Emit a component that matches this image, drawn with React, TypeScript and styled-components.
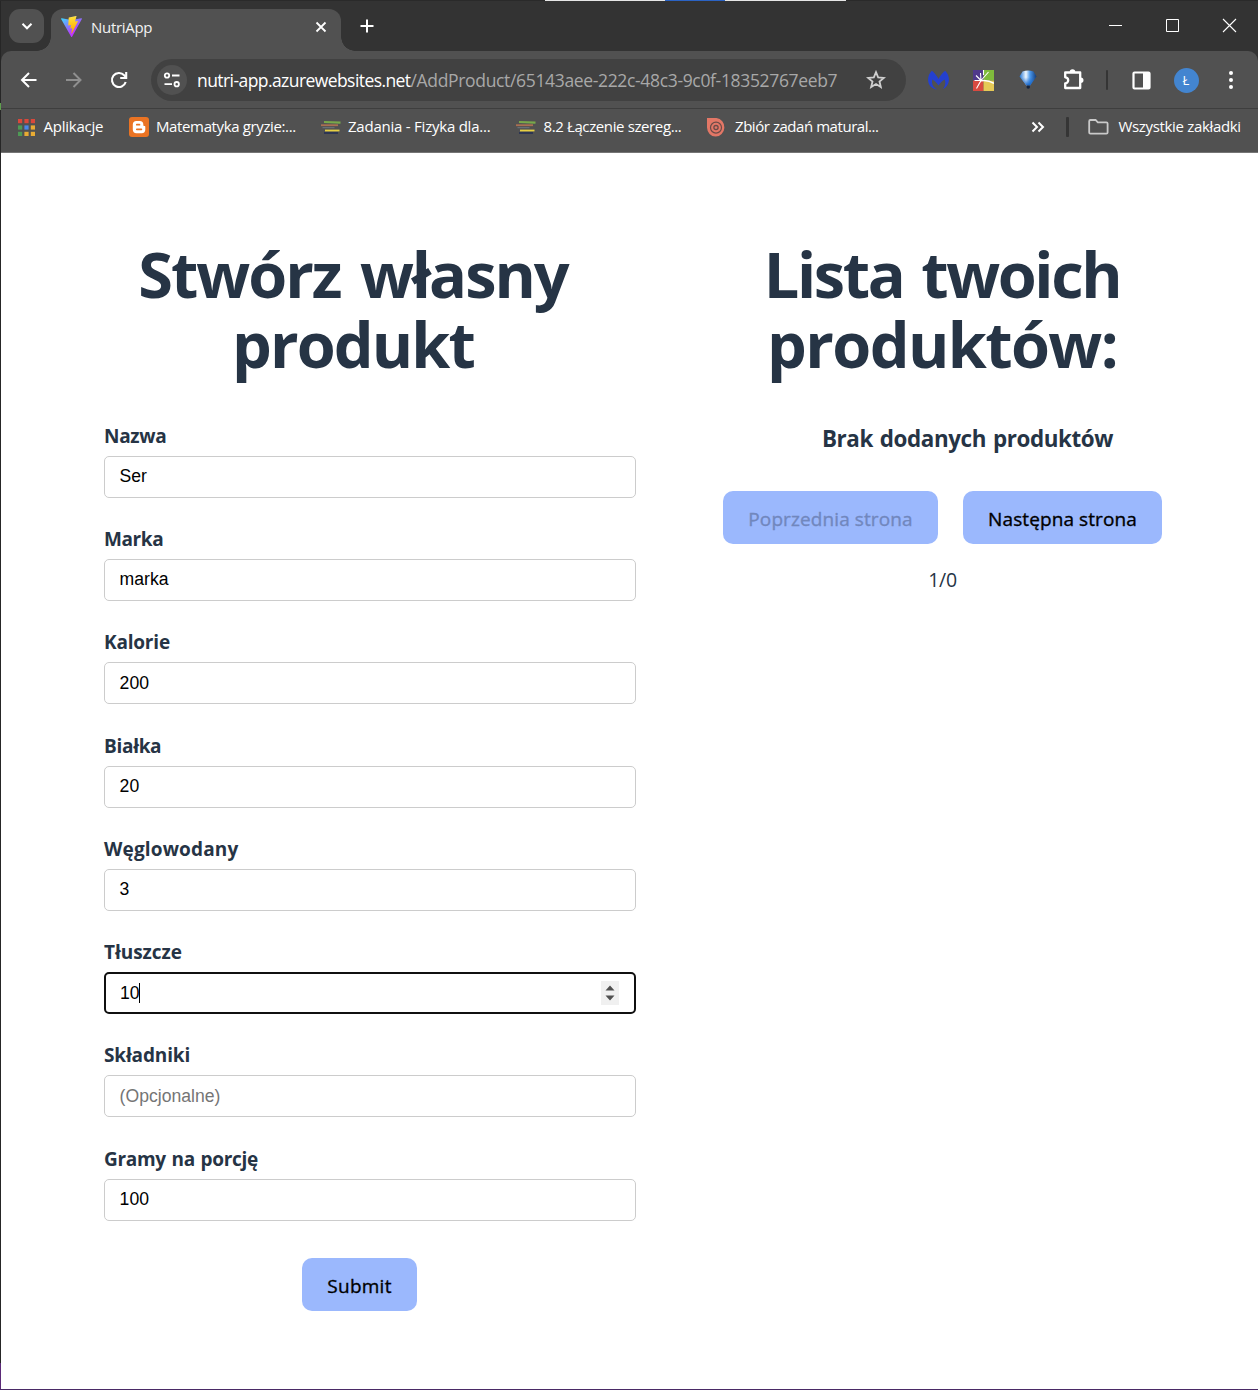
import React from "react";
import styled, { createGlobalStyle } from "styled-components";

const ui = `"Open Sans", "Noto Sans", sans-serif`;

const GlobalStyle = createGlobalStyle`
  * { box-sizing: border-box; }
  body { margin: 0; background: #fff; font-family: ${ui}; }
  svg { display: block; flex: none; }
`;

const Screen = styled.div`
  display: grid;
  grid-template-columns: 1px 1fr;
  grid-template-rows: 1px 1388px 1px;
  width: 1258px;
  height: 1390px;
  overflow: hidden;
`;
const TopEdge = styled.div`
  grid-column: 1 / 3;
  background: linear-gradient(90deg, #2a2a2a 545px, #e6e6e6 545px 665px, #2b63c4 665px 725px, #e6e6e6 725px 846px, #2a2a2a 846px);
`;
const LeftEdge = styled.div`
  background: linear-gradient(#262626 102px, #5fa04e 102px 109px, #262626 109px 1362px, #5b2a78 1362px);
`;
const BottomEdge = styled.div`
  grid-column: 1 / 3;
  background: #4a2a66;
`;
const Window = styled.div`
  display: flex;
  flex-direction: column;
  background: #333;
  min-width: 0;
`;

/* Tab strip */
const TabStrip = styled.div`
  display: flex;
  align-items: flex-start;
  height: 50px;
  padding: 8px 0 0 8px;
`;
const TabSearch = styled.div`
  display: grid;
  place-items: center;
  width: 35px;
  height: 34px;
  border-radius: 11px;
  background: #515151;
`;
const Tab = styled.div`
  position: relative;
  display: flex;
  align-items: center;
  width: 290px;
  height: 42px;
  margin-left: 7px;
  padding: 0 12px 7px 10px;
  border-radius: 12px 12px 0 0;
  background: #515151;
  &::before,
  &::after {
    content: "";
    position: absolute;
    bottom: 0;
    width: 14px;
    height: 14px;
  }
  &::before {
    left: -14px;
    background: radial-gradient(circle at 0 0, transparent 13.5px, #515151 14px);
  }
  &::after {
    right: -14px;
    background: radial-gradient(circle at 100% 0, transparent 13.5px, #515151 14px);
  }
`;
const TabTitle = styled.div`
  flex: 1;
  margin-left: 9px;
  padding-top: 1px;
  color: #f2f2f2;
  font-size: 15px;
  letter-spacing: -0.3px;
`;
const NewTab = styled.div`
  display: grid;
  place-items: center;
  width: 34px;
  height: 34px;
  margin-left: 9px;
`;
const WindowControls = styled.div`
  display: flex;
  gap: 37px;
  height: 34px;
  margin: 0 18px 0 auto;
  align-items: center;
`;

/* Toolbar */
const Toolbar = styled.div`
  display: flex;
  align-items: center;
  height: 57px;
  padding: 1px 0 0 12.5px;
  border-radius: 10px 10px 0 0;
  background: #515151;
`;
const IconRow = styled.div`
  display: flex;
  gap: 15px;
`;
const Slot = styled.div`
  display: grid;
  place-items: center;
  width: 30px;
  height: 30px;
`;
const AddressBar = styled.div`
  display: flex;
  align-items: center;
  width: 755px;
  height: 42px;
  margin: 0 17px 0 17.5px;
  padding: 0 20px 0 6px;
  border-radius: 21px;
  background: #414141;
`;
const SiteInfo = styled.div`
  display: grid;
  place-items: center;
  width: 30px;
  height: 30px;
  border-radius: 50%;
  background: #515151;
`;
const Url = styled.div`
  flex: 1;
  margin-left: 10px;
  color: #a8a8a8;
  font-size: 17.5px;
  letter-spacing: -0.34px;
  white-space: nowrap;
`;
const Host = styled.span`
  color: #fff;
  letter-spacing: -0.57px;
`;
const Divider = styled.div<{ $gap: string; $w: number }>`
  width: ${(p) => p.$w}px;
  height: 20px;
  margin: ${(p) => p.$gap};
  border-radius: 1px;
  background: #353535;
`;
const Avatar = styled.div`
  display: grid;
  place-items: center;
  width: 25px;
  height: 25px;
  border-radius: 50%;
  background: #4385d0;
  color: #fff;
  font-size: 13px;
`;

/* Bookmarks */
const Bookmarks = styled.div`
  display: flex;
  align-items: center;
  height: 45px;
  padding: 0 0 7px 17px;
  border-top: 1px solid #3e3e3e;
  border-bottom: 1px solid #757575;
  background: #515151;
  color: #fff;
`;
const Bookmark = styled.div<{ $w: number; $gap: number; $track: number }>`
  display: flex;
  align-items: center;
  width: ${(p) => p.$w}px;
  gap: ${(p) => p.$gap}px;
  font-size: 15px;
  letter-spacing: ${(p) => p.$track}px;
  white-space: nowrap;
`;
const BookmarkName = styled.span`
  padding-bottom: 2px;
`;
const Spring = styled.div`
  flex: 1;
`;

/* Page */
const Page = styled.main`
  flex: 1;
  display: grid;
  grid-template-columns: 589px 589px;
  padding: 86px 0 0 58px;
  background: #fff;
  color: #263445;
`;
const Column = styled.section`
  display: flex;
  flex-direction: column;
  align-items: center;
`;
const Title = styled.h1`
  margin: 0;
  font-size: 63px;
  line-height: 70.4px;
  font-weight: 700;
  text-align: center;
`;
const TitleLine = styled.span<{ $track: number; $word?: number }>`
  display: block;
  margin-left: -1px;
  letter-spacing: ${(p) => p.$track}px;
  word-spacing: ${(p) => p.$word ?? 0}px;
`;
const Form = styled.form`
  display: flex;
  flex-direction: column;
  width: 532px;
  margin: 42px 0 0 33px;
`;
const Field = styled.div`
  height: 103.25px;
`;
const Label = styled.div<{ $track: number }>`
  height: 34px;
  line-height: 28.4px;
  font-size: 19px;
  font-weight: 700;
  letter-spacing: ${(p) => p.$track}px;
  word-spacing: 1px;
`;
const Input = styled.div<{ $focused?: boolean; $muted?: boolean }>`
  display: flex;
  align-items: center;
  height: 42px;
  padding: 0 ${(p) => (p.$focused ? "14px 0 14px" : "15px 0.2px 14.6px")};
  border: ${(p) => (p.$focused ? "2px solid #101010" : "1px solid #ccc")};
  border-radius: 5px;
  background: #fff;
  color: ${(p) => (p.$muted ? "#757575" : "#000")};
  font-family: "Liberation Sans", Arial, sans-serif;
  font-size: 17.6px;
`;
const Caret = styled.span`
  width: 1px;
  height: 20px;
  margin-left: -1px;
  background: #000;
`;
const Spinner = styled.span`
  display: grid;
  place-items: center;
  width: 18px;
  height: 24px;
  margin-left: auto;
  margin-right: 1px;
  background: #f0f0f0;
`;
const Button = styled.button<{ $w: number; $track: number }>`
  width: ${(p) => p.$w}px;
  height: 53px;
  padding: 3px 0 0;
  border: 0;
  border-radius: 10px;
  background: #9bb8fd;
  color: #000;
  font-family: ${ui};
  font-size: 19px;
  font-weight: 500;
  -webkit-text-stroke: 0.35px currentColor;
  letter-spacing: ${(p) => p.$track}px;
  white-space: nowrap;
  &:disabled {
    color: #7187bd;
  }
`;
const SubmitRow = styled.div`
  display: flex;
  justify-content: center;
  margin-top: 10px;
  padding-right: 21px;
`;
const Empty = styled.p`
  margin: 42px 0 0 50px;
  line-height: 34px;
  font-size: 22.4px;
  font-weight: 700;
  letter-spacing: -0.4px;
  word-spacing: 1.5px;
`;
const Pager = styled.div`
  display: flex;
  gap: 25px;
  margin-top: 35px;
`;
const PageCount = styled.div`
  margin-top: 22px;
  line-height: 28px;
  font-size: 19.5px;
  letter-spacing: -0.3px;
`;

const ViteLogo = () => (
  <svg width="21" height="21" viewBox="0 0 256 257">
    <defs>
      <linearGradient id="va" x1="-.8%" x2="57.6%" y1="7.7%" y2="78.4%">
        <stop offset="0%" stopColor="#41D1FF" />
        <stop offset="100%" stopColor="#BD34FE" />
      </linearGradient>
      <linearGradient id="vb" x1="43.4%" x2="50.3%" y1="2.2%" y2="89%">
        <stop offset="0%" stopColor="#FFEA83" />
        <stop offset="8.3%" stopColor="#FFDD35" />
        <stop offset="100%" stopColor="#FFA800" />
      </linearGradient>
    </defs>
    <path fill="url(#va)" d="M255.2 37.9 134.9 252.9c-2.5 4.5-8.9 4.5-11.4.1L.9 37.9c-2.7-4.8 1.4-10.6 6.8-9.6l120.4 21.5c.8.1 1.6.1 2.3 0l117.9-21.5c5.4-1 9.6 4.8 6.9 9.6Z" />
    <path fill="url(#vb)" d="M185.4.1 96.4 17.5a3.3 3.3 0 0 0-2.6 3l-5.5 92.5a3.3 3.3 0 0 0 4 3.4l24.8-5.7a3.3 3.3 0 0 1 4 3.9l-7.4 36a3.3 3.3 0 0 0 4.2 3.8l15.3-4.6a3.3 3.3 0 0 1 4.2 3.8l-11.7 56.6c-.7 3.6 4 5.5 6 2.5l1.3-2L205.5 66a3.3 3.3 0 0 0-3.5-4.7l-25.5 4.9a3.3 3.3 0 0 1-3.8-4.1L189.3 4.4A3.3 3.3 0 0 0 185.4.1Z" />
  </svg>
);

const Line = ({ d, size, color = "#fff", w = 2 }: { d: string; size: number; color?: string; w?: number }) => (
  <svg width={size} height={size} viewBox={`0 0 ${size} ${size}`} fill="none" stroke={color} strokeWidth={w}>
    <path d={d} />
  </svg>
);

const ReloadIcon = () => (
  <svg width="18" height="18" viewBox="0 0 18 18" fill="none" stroke="#fff" strokeWidth="2.1">
    <path d="M15.7 11a7 7 0 1 1-1.5-6.7L16 6.2" />
    <path d="M16.2 1v6h-6" />
  </svg>
);

const TuneIcon = () => (
  <svg width="18" height="16" viewBox="0 0 18 16" fill="none" stroke="#fff" strokeWidth="1.8">
    <circle cx="4" cy="3.5" r="2.2" />
    <path d="M9 3.5h7.5M1.5 12.2H9" />
    <circle cx="13.7" cy="12.2" r="2.2" />
  </svg>
);

const StarIcon = () => (
  <svg width="20" height="20" viewBox="0 0 20 20" fill="none" stroke="#cfcfcf" strokeWidth="1.8">
    <path d="m10 2.2 2.15 5.25 5.7.45-4.35 3.65 1.35 5.55L10 14.1l-4.85 3 1.35-5.55L2.15 7.9l5.7-.45z" />
  </svg>
);

const MalwareIcon = () => (
  <svg width="21" height="20" viewBox="0 0 21 20" fill="#2440d0">
    <path d="M3.8.8C5.800 2 8.500 5.200 10.500 9 12.500 5.200 15.200 2 17.200.8 19.800 3.500 21.200 7 20.900 10.500c-.3 3.600-2.700 7.200-6 8.700 2.300-2.800 3-6.200 1.800-9.700C14.500 10.500 12 13 10.500 15.500 9 13 6.500 10.500 4.300 9.500c-1 4.600.7 8.200 5.200 9.800C4.500 19.600.4 15.500.1 10.500-.2 7 1.200 3.500 3.800.8Z" />
  </svg>
);

const PinwheelIcon = () => (
  <svg width="21" height="21" viewBox="0 0 21 21">
    <path fill="#50398c" d="M0 0h10.500v10.500H0z" />
    <path fill="#7fbb3c" d="M10.500 0H21v10.500H10.500z" />
    <path fill="#d94a40" d="M0 10.500h10.500V21H0z" />
    <path fill="#e5c956" d="M10.500 10.500H21V21H10.500z" />
    <path stroke="#fff" strokeWidth="1.100" d="M8 10.500 15.500 2M8 10.500 7.500 3M8 10.500 3 5.500M8 10.500H1.500M8 10.500 3.500 18.500M10.500 0v5" />
    <path fill="none" stroke="#fff" strokeWidth="1.500" d="M8 10.800q7-1 13 2.500" />
  </svg>
);

const BalloonIcon = () => (
  <svg width="18" height="20" viewBox="0 0 18 20">
    <defs>
      <linearGradient id="bl" x1="0" x2="1">
        <stop offset="0" stopColor="#1c6fd0" />
        <stop offset=".38" stopColor="#f0f8ff" />
        <stop offset=".62" stopColor="#4a97ea" />
        <stop offset="1" stopColor="#123a78" />
      </linearGradient>
      <linearGradient id="bs" x1="0" x2="0" y1="0" y2="1">
        <stop offset=".45" stopColor="#1a6bd0" stopOpacity="0" />
        <stop offset="1" stopColor="#1463c8" />
      </linearGradient>
    </defs>
    <path fill="url(#bl)" d="M3.500 1.500Q9-.5 14.500 1.500L17.500 6.500 11 15.500H7.500L.5 6.500Z" />
    <path fill="url(#bs)" d="M3.500 1.500Q9-.5 14.500 1.500L17.500 6.500 11 15.500H7.500L.5 6.500Z" />
    <path fill="#16243d" d="M7.700 15.500h3.100V18q-1.600 1.500-3.100 0Z" />
  </svg>
);

const PuzzleIcon = () => (
  <svg width="22" height="22" viewBox="0 0 22 22">
    <path fill="none" stroke="#fff" strokeWidth="2.300" strokeLinejoin="round" d="M2.700 4h15v15.500h-15v-4.700a3 3 0 0 0 0-6Z" transform="translate(.5 -.5)" />
    <path fill="#fff" d="M7.700 3a2.800 2.800 0 0 1 5.600 0ZM18.700 8.400a2.800 2.800 0 0 1 0 5.600Z" />
  </svg>
);

const PanelIcon = () => (
  <svg width="19" height="19" viewBox="0 0 19 19">
    <rect x="1.500" y="1.500" width="16" height="16" rx="1" fill="none" stroke="#fff" strokeWidth="2.200" />
    <path fill="#fff" d="M11 1h7v17h-7z" />
  </svg>
);

const DotsIcon = () => (
  <svg width="6" height="20" viewBox="0 0 6 20" fill="#fff">
    <circle cx="3" cy="3" r="2" />
    <circle cx="3" cy="10" r="2" />
    <circle cx="3" cy="17" r="2" />
  </svg>
);

const appColors = ["#d9483b", "#d9483b", "#d9483b", "#4e9a55", "#4a86e8", "#e8ab33", "#4e9a55", "#e8ab33", "#e8ab33"];
const AppsIcon = () => (
  <svg width="17" height="17" viewBox="0 0 17 17">
    {appColors.map((c, i) => (
      <rect key={i} x={(i % 3) * 6.4} y={Math.floor(i / 3) * 6.4} width="4.2" height="4.2" fill={c} />
    ))}
  </svg>
);

const BloggerIcon = () => (
  <svg width="20" height="20" viewBox="0 0 20 20">
    <rect width="20" height="20" rx="3" fill="#ea7323" />
    <path fill="#fff" d="M7.500 4h3.300A3.500 3.500 0 0 1 14.300 7.500c0 1 .3 1.500 1.200 1.500.6 0 .8.400.8 1v2.500a3.700 3.700 0 0 1-3.800 3.700h-5A3.700 3.700 0 0 1 3.800 12.500v-5A3.600 3.600 0 0 1 7.500 4Z" />
    <path stroke="#ea7323" strokeWidth="1.700" strokeLinecap="round" d="M7.800 7.700h2.700M7.800 12.300h4.600" />
  </svg>
);

const BooksIcon = () => (
  <svg width="20" height="16" viewBox="0 0 20 16" fill="none">
    <path stroke="#78a94a" strokeWidth="2.200" d="M3 3 19.500 3.700" />
    <path stroke="#a96f52" strokeWidth="1.800" d="M0 6.200h17" />
    <path stroke="#6c7780" strokeWidth="1" d="M1.500 8.700h12" />
    <path stroke="#e6cf43" strokeWidth="1.800" d="M4 11.500h14.500" />
    <path stroke="#1d2a55" strokeWidth="1.400" d="M3 14h14" />
  </svg>
);

const SwirlIcon = () => (
  <svg width="18" height="19" viewBox="0 0 18 19" fill="none">
    <path fill="#e37766" d="M0 0h9.500A8.700 9.300 0 1 1 0 9.500Z" />
    <circle cx="9" cy="9.600" r="5.500" stroke="#6b4b48" strokeWidth="1.200" />
    <circle cx="9" cy="9.600" r="2.100" stroke="#6b4b48" strokeWidth="1.300" />
  </svg>
);

const FolderIcon = () => (
  <svg width="21" height="16" viewBox="0 0 21 16" fill="none" stroke="#c9c9c9" strokeWidth="1.800">
    <path d="M1.200 2.200q0-1.200 1.200-1.200h5.200l2.200 2.400h8.600q1.200 0 1.200 1.200v8.800q0 1.200-1.200 1.200H2.400q-1.200 0-1.200-1.200z" />
  </svg>
);

const bookmarks = [
  { text: "Aplikacje", icon: <AppsIcon />, w: 111, gap: 8.5, track: -0.24 },
  { text: "Matematyka gryzie:...", icon: <BloggerIcon />, w: 192, gap: 7, track: -0.37 },
  { text: "Zadania - Fizyka dla...", icon: <BooksIcon />, w: 195, gap: 7, track: -0.23 },
  { text: "8.2 Łączenie szereg...", icon: <BooksIcon />, w: 191, gap: 7.5, track: -0.38 },
  { text: "Zbiór zadań matural...", icon: <SwirlIcon />, w: 180, gap: 10, track: -0.45 },
];

const fields = [
  { label: "Nazwa", value: "Ser", track: -0.3 },
  { label: "Marka", value: "marka", track: -0.4 },
  { label: "Kalorie", value: "200", track: -0.2 },
  { label: "Białka", value: "20", track: -0.3 },
  { label: "Węglowodany", value: "3", track: 0.15 },
  { label: "Tłuszcze", value: "10", focused: true, track: -0.05 },
  { label: "Składniki", value: "(Opcjonalne)", muted: true, track: -0.15 },
  { label: "Gramy na porcję", value: "100", track: -0.3 },
];

export default function App() {
  return (
    <Screen>
      <GlobalStyle />
      <TopEdge />
      <LeftEdge />
      <Window>
        <TabStrip>
          <TabSearch>
            <Line size={12} d="M1.500 3.800 6 8.300l4.500-4.500" />
          </TabSearch>
          <Tab>
            <ViteLogo />
            <TabTitle>NutriApp</TabTitle>
            <Line size={16} d="m3.500 3.500 9 9m0-9-9 9" w={1.8} />
          </Tab>
          <NewTab>
            <Line size={14} d="M7 .5v13M.5 7h13" />
          </NewTab>
          <WindowControls>
            <Line size={20} d="M3 9.500h13" w={1} />
            <Line size={20} d="M3.500 3.500h12v12h-12z" w={1} />
            <Line size={20} d="m3 3 13 13m0-13L3 16" w={1.1} />
          </WindowControls>
        </TabStrip>

        <Toolbar>
          <IconRow>
            <Slot>
              <Line size={18} d="M16.500 9h-14M9 2 2 9l7 7" />
            </Slot>
            <Slot>
              <Line size={18} color="#8f8f8f" d="M1 9h14M8.500 2l7 7-7 7" />
            </Slot>
            <Slot>
              <ReloadIcon />
            </Slot>
          </IconRow>
          <AddressBar>
            <SiteInfo>
              <TuneIcon />
            </SiteInfo>
            <Url>
              <Host>nutri-app.azurewebsites.net</Host>/AddProduct/65143aee-222c-48c3-9c0f-18352767eeb7
            </Url>
            <StarIcon />
          </AddressBar>
          <IconRow>
            <Slot><MalwareIcon /></Slot>
            <Slot><PinwheelIcon /></Slot>
            <Slot><BalloonIcon /></Slot>
            <Slot><PuzzleIcon /></Slot>
          </IconRow>
          <Divider $w={2} $gap="0 18px 0 18px" />
          <IconRow>
            <Slot><PanelIcon /></Slot>
            <Slot><Avatar>Ł</Avatar></Slot>
            <Slot><DotsIcon /></Slot>
          </IconRow>
        </Toolbar>

        <Bookmarks>
          {bookmarks.map((b) => (
            <Bookmark key={b.text} $w={b.w} $gap={b.gap} $track={b.track}>
              {b.icon}
              <BookmarkName>{b.text}</BookmarkName>
            </Bookmark>
          ))}
          <Spring />
          <Line size={14} d="m1.500 2.500 4.500 4.500-4.500 4.500M7.500 2.500 12 7l-4.500 4.500" />
          <Divider $w={3} $gap="0 19px 0 21px" />
          <Bookmark $w={170} $gap={9.5} $track={-0.33}>
            <FolderIcon />
            <BookmarkName>Wszystkie zakładki</BookmarkName>
          </Bookmark>
        </Bookmarks>

        <Page>
          <Column>
            <Title>
              <TitleLine $track={-2} $word={5}>Stwórz własny</TitleLine>
              <TitleLine $track={-1.9}>produkt</TitleLine>
            </Title>
            <Form>
              {fields.map((f) => (
                <Field key={f.label}>
                  <Label $track={f.track}>{f.label}</Label>
                  <Input $focused={f.focused} $muted={f.muted}>
                    {f.value}
                    {f.focused && (
                      <>
                        <Caret />
                        <Spinner>
                          <svg width="10" height="16" viewBox="0 0 10 16" fill="#505050">
                            <path d="M.5 5.500 5 .5l4.500 5zM.5 10.500h9L5 15.500z" />
                          </svg>
                        </Spinner>
                      </>
                    )}
                  </Input>
                </Field>
              ))}
              <SubmitRow>
                <Button type="button" $w={115} $track={0.25}>Submit</Button>
              </SubmitRow>
            </Form>
          </Column>
          <Column>
            <Title>
              <TitleLine $track={-2.4} $word={4}>Lista twoich</TitleLine>
              <TitleLine $track={-1.6}>produktów:</TitleLine>
            </Title>
            <Empty>Brak dodanych produktów</Empty>
            <Pager>
              <Button disabled $w={215} $track={0.1}>Poprzednia strona</Button>
              <Button $w={199} $track={0.1}>Następna strona</Button>
            </Pager>
            <PageCount>1/0</PageCount>
          </Column>
        </Page>
      </Window>
      <BottomEdge />
    </Screen>
  );
}
